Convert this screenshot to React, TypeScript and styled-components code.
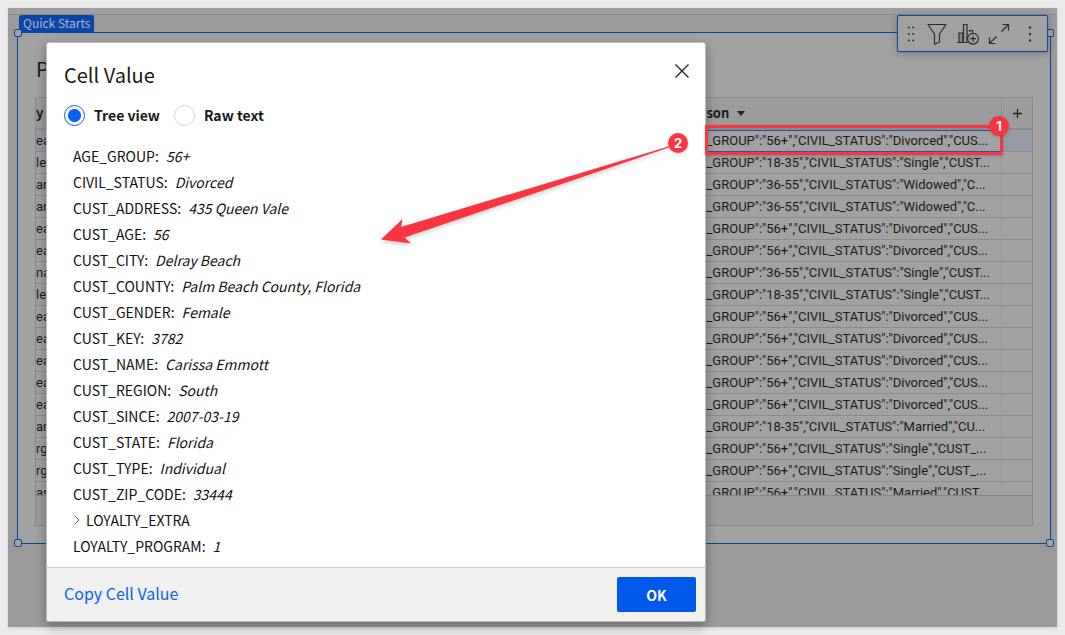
import React from "react";
import styled, { createGlobalStyle } from "styled-components";

const SANS = `"Noto Sans CJK SC", "Noto Sans", sans-serif`;
const BLUE = "#0b45a0";
const RED = "#fb3441";

const GlobalStyle = createGlobalStyle`
  *, *::before, *::after { box-sizing: border-box; }
  body {
    margin: 0;
    background: #ebebeb;
    font-family: ${SANS};
    color: #1a1a1a;
  }
  button, input { font: inherit; }
`;

const Page = styled.div`
  min-height: 100vh;
  padding: 8px;
  display: flex;
`;

const Frame = styled.div`
  position: relative;
  flex: 1;
  min-width: 0;
  padding: 24px 6px 83px 9px;
  background: #9a9a9a;
  box-shadow: 0 1px 4px rgba(0, 0, 0, 0.12);

  &::before {
    content: "";
    position: absolute;
    top: 0;
    left: 0;
    right: 0;
    height: 7px;
    background: #9e9e9e;
    border-bottom: 1px solid #8c8c8c;
  }
`;

const Widget = styled.section`
  position: relative;
  border: 1px solid ${BLUE};
  background: #a1a1a1;
  padding: 23px 17px 17px 17px;
`;

const WidgetTag = styled.span`
  position: absolute;
  left: 1px;
  bottom: 100%;
  height: 18px;
  padding: 0 4px;
  border-radius: 2px 2px 0 0;
  background: #0a46a6;
  color: #a9b6cb;
  font-size: 12px;
  line-height: 16px;
  white-space: nowrap;
`;

const Handle = styled.i<{ $v: "top" | "bottom"; $h: "left" | "right" }>`
  position: absolute;
  ${(p) => p.$v}: -4px;
  ${(p) => p.$h}: -4px;
  width: 8px;
  height: 8px;
  border: 1px solid ${BLUE};
  border-radius: 2px;
  background: #a3a3a3;
`;

const Title = styled.h2`
  margin: 0 0 15px;
  padding-left: 1px;
  font-size: 20px;
  font-weight: 400;
  line-height: 26px;
`;

const Toolbar = styled.div`
  position: absolute;
  top: -18px;
  right: 2px;
  display: flex;
  align-items: center;
  width: 151px;
  height: 37px;
  border: 1px solid #1449a0;
  border-radius: 2px;
  background: #a1a1a1;
  box-shadow: 0 0 1px #1d56ad, 0 2px 8px rgba(0, 0, 0, 0.2);
`;

const ToolButton = styled.button<{ $w: number }>`
  width: ${(p) => p.$w}px;
  height: 35px;
  padding: 0;
  border: 0;
  background: none;
  color: #2b2b2b;
  display: flex;
  align-items: center;
  justify-content: center;
`;

const GridBox = styled.div`
  height: 429px;
  border: 1px solid #8a8a8a;
  display: flex;
  flex-direction: column;
  overflow: hidden;
`;

const GridBody = styled.div`
  height: 397px;
  overflow: hidden;
`;

const GridFoot = styled.div`
  flex: 1;
  border-top: 1px solid #878787;
  background: #9b9b9b;
`;

const Table = styled.table`
  width: 100%;
  border-collapse: separate;
  border-spacing: 0;
  table-layout: fixed;
  font-family: Roboto, sans-serif;
  font-size: 13px;
  line-height: 20px;
  text-align: left;
`;

const Th = styled.th<{ $w?: number; $pad?: number }>`
  width: ${(p) => (p.$w ? `${p.$w}px` : "auto")};
  height: 32px;
  padding: 0 0 0 ${(p) => p.$pad ?? 0}px;
  background: #9c9c9c;
  border-bottom: 2px solid #8b8b8b;
  border-right: 1px solid #919191;
  font-size: 13px;
  font-weight: 700;
  font-family: ${SANS};
  white-space: nowrap;
  &:last-child { border-right: 0; }
`;

const Td = styled.td<{ $on?: boolean }>`
  height: 22px;
  padding: 0;
  border-bottom: 1px solid #8b8b8b;
  border-right: 1px solid #9a9a9a;
  background: ${(p) => (p.$on ? "#9799a3" : "transparent")};
  white-space: nowrap;
  &:last-child { border-right: 0; }
`;

const JsonTd = styled(Td)<{ $selected: boolean }>`
  padding-left: 4px;
  ${(p) =>
    p.$selected &&
    `
    background: #a1a1a1;
    box-shadow: inset 0 1px 0 #1d56ad;
    border-color: #1d56ad;
  `}
`;

const HeadLabel = styled.span`
  display: flex;
  align-items: center;
  gap: 8px;
`;

const AddColumn = styled.button`
  width: 100%;
  padding: 0;
  border: 0;
  background: none;
  color: #222;
  display: flex;
  justify-content: center;
`;

const Dialog = styled.div`
  position: absolute;
  top: 34px;
  left: 38px;
  width: 660px;
  border: 1px solid #b9b9b9;
  border-radius: 3px;
  overflow: hidden;
  background: #fff;
  box-shadow: 0 4px 12px rgba(0, 0, 0, 0.3);
`;

const DialogHead = styled.header`
  display: flex;
  justify-content: space-between;
  align-items: center;
  padding: 16px 15px 0 17px;
  height: 48px;
`;

const DialogTitle = styled.h1`
  margin: 0;
  font-size: 20px;
  font-weight: 400;
  line-height: 28px;
`;

const CloseButton = styled.button`
  width: 16px;
  height: 16px;
  padding: 0;
  border: 0;
  background: none;
  display: flex;
  margin-bottom: 8px;
`;

const Modes = styled.fieldset`
  margin: 0;
  padding: 14px 17px 0;
  border: 0;
  display: flex;
  gap: 14px;
`;

const Mode = styled.label`
  display: flex;
  align-items: center;
  gap: 9px;
  height: 21px;
  font-size: 14px;
  font-weight: 700;
  line-height: 21px;
`;

const Radio = styled.input`
  appearance: none;
  margin: 0;
  width: 21px;
  height: 21px;
  border: 1px solid #d4d4d4;
  border-radius: 50%;
  background: #fff;
  &:checked {
    border-color: #0a5ef0;
    background: radial-gradient(circle, #0a5ef0 6px, #fff 7px);
  }
`;

const Tree = styled.ul`
  list-style: none;
  margin: 0;
  padding: 17px 26px 8px;
`;

const Leaf = styled.li`
  display: flex;
  align-items: center;
  gap: 7px;
  height: 26px;
  font-size: 14px;
  line-height: 26px;
  color: #111;
`;

const Branch = styled(Leaf)`
  gap: 5px;
`;

const Value = styled.em`
  font-style: italic;
`;

const DialogFoot = styled.footer`
  display: flex;
  align-items: center;
  justify-content: space-between;
  height: 54px;
  padding: 0 9px 0 17px;
  border-top: 1px solid #ccc;
  background: #f0f0f0;
`;

const CopyButton = styled.button`
  padding: 0 0 4px;
  border: 0;
  background: none;
  color: #0b62ee;
  font-size: 16px;
  line-height: 24px;
`;

const OkButton = styled.button`
  width: 79px;
  height: 35px;
  padding: 0;
  border: 0;
  border-radius: 2px;
  background: #0059eb;
  color: #fff;
  font-size: 14px;
  font-weight: 700;
`;

const Highlight = styled.div`
  position: absolute;
  top: 117px;
  right: 54px;
  width: 298px;
  height: 30px;
  border: 3px solid ${RED};
  border-radius: 1px;
  box-shadow: 0 1px 3px rgba(0, 0, 0, 0.2);
`;

const Badge = styled.span`
  position: absolute;
  width: 20px;
  height: 20px;
  border-radius: 50%;
  background: ${RED};
  color: #fff;
  font-family: Inter, sans-serif;
  font-size: 13px;
  font-weight: 700;
  line-height: 20px;
  text-align: center;
  box-shadow: 0 1px 3px rgba(0, 0, 0, 0.2);
`;

const CellBadge = styled(Badge)`
  top: -12px;
  right: -9px;
`;

const DialogBadge = styled(Badge)`
  top: 125px;
  left: 660px;
`;

const Arrow = styled.svg`
  position: absolute;
  top: 132px;
  left: 368px;
  filter: drop-shadow(0 2px 2px rgba(0, 0, 0, 0.2));
`;

const fields: [string, string?][] = [
  ["AGE_GROUP", "56+"],
  ["CIVIL_STATUS", "Divorced"],
  ["CUST_ADDRESS", "435 Queen Vale"],
  ["CUST_AGE", "56"],
  ["CUST_CITY", "Delray Beach"],
  ["CUST_COUNTY", "Palm Beach County, Florida"],
  ["CUST_GENDER", "Female"],
  ["CUST_KEY", "3782"],
  ["CUST_NAME", "Carissa Emmott"],
  ["CUST_REGION", "South"],
  ["CUST_SINCE", "2007-03-19"],
  ["CUST_STATE", "Florida"],
  ["CUST_TYPE", "Individual"],
  ["CUST_ZIP_CODE", "33444"],
  ["LOYALTY_EXTRA"],
  ["LOYALTY_PROGRAM", "1"],
];

const rows: [string, string, string, string][] = [
  ["ea", "56+", "Divorced", '"CUS...'],
  ["le", "18-35", "Single", '"CUST...'],
  ["ar", "36-55", "Widowed", '"C...'],
  ["ar", "36-55", "Widowed", '"C...'],
  ["ea", "56+", "Divorced", '"CUS...'],
  ["ea", "56+", "Divorced", '"CUS...'],
  ["na", "36-55", "Single", '"CUST...'],
  ["le", "18-35", "Single", '"CUST...'],
  ["ea", "56+", "Divorced", '"CUS...'],
  ["ea", "56+", "Divorced", '"CUS...'],
  ["ea", "56+", "Divorced", '"CUS...'],
  ["ea", "56+", "Divorced", '"CUS...'],
  ["ea", "56+", "Divorced", '"CUS...'],
  ["ar", "18-35", "Married", '"CU...'],
  ["rg", "56+", "Single", '"CUST_...'],
  ["rg", "56+", "Single", '"CUST_...'],
  ["as", "56+", "Married", '"CUST...'],
];

export default function App() {
  return (
    <Page>
      <GlobalStyle />
      <Frame>
        <Widget>
          <WidgetTag>Quick Starts</WidgetTag>
          <Title>P</Title>
          <GridBox>
            <GridBody>
              <Table>
                <thead>
                  <tr>
                    <Th>y</Th>
                    <Th $w={332} $pad={29}>
                      <HeadLabel>
                        Json
                        <svg width="8" height="5" viewBox="0 0 8 5">
                          <path d="M0 0h8L4 5z" fill="#222" />
                        </svg>
                      </HeadLabel>
                    </Th>
                    <Th $w={30}>
                      <AddColumn aria-label="Add column">
                        <svg width="9" height="9" viewBox="0 0 9 9">
                          <path d="M4.500 0v9M0 4.500h9" stroke="#222" strokeWidth="1.300" />
                        </svg>
                      </AddColumn>
                    </Th>
                  </tr>
                </thead>
                <tbody>
                  {rows.map(([city, age, status, tail], i) => (
                    <tr key={i}>
                      <Td $on={i === 0}>{city}</Td>
                      <JsonTd $selected={i === 0}>
                        {`{"AGE_GROUP":"${age}","CIVIL_STATUS":"${status}",${tail}`}
                      </JsonTd>
                      <Td $on={i === 0} />
                    </tr>
                  ))}
                </tbody>
              </Table>
            </GridBody>
            <GridFoot />
          </GridBox>
          <Handle $v="top" $h="left" />
          <Handle $v="top" $h="right" />
          <Handle $v="bottom" $h="left" />
          <Handle $v="bottom" $h="right" />
          <Toolbar>
            <ToolButton $w={26} aria-label="Move">
              <svg width="8" height="18" viewBox="0 0 8 18" fill="currentColor">
                {[2.5, 9, 15.5].map((y) => (
                  <g key={y}>
                    <circle cx="1.800" cy={y} r="1" />
                    <circle cx="6.200" cy={y} r="1" />
                  </g>
                ))}
              </svg>
            </ToolButton>
            <ToolButton $w={26} aria-label="Filter">
              <svg width="20" height="22" viewBox="0 0 20 22" fill="none" stroke="currentColor" strokeWidth="1.200">
                <path d="M1 1.500h18l-6.500 9.500v8l-5 2.200V11z" strokeLinejoin="round" />
              </svg>
            </ToolButton>
            <ToolButton $w={36} aria-label="Add chart">
              <svg width="24" height="22" viewBox="0 0 24 22" fill="none" stroke="currentColor" strokeWidth="1.200">
                <path d="M1 19.500h10.500M3 19.500V10h4v9.500M7.500 19.500V1.500h3.500v18M13.500 9V7.500h3v2" />
                <path d="M3.500 10h3v9.500h-3z" fill="currentColor" fillOpacity="0.250" stroke="none" />
                <circle cx="17" cy="15.700" r="5.400" />
                <path d="M17 12.700v6M14 15.700h6" />
              </svg>
            </ToolButton>
            <ToolButton $w={26} aria-label="Expand">
              <svg width="22" height="22" viewBox="0 0 22 22" fill="none" stroke="currentColor" strokeWidth="1.200">
                <path d="M14.500 1.500H20.500V7.500M20.500 1.500L13.500 8.500M1.500 14.500V20.500H7.500M1.500 20.500L8.500 13.500" />
              </svg>
            </ToolButton>
            <ToolButton $w={35} aria-label="More">
              <svg width="4" height="18" viewBox="0 0 4 18" fill="currentColor">
                <circle cx="2" cy="2.500" r="1.200" />
                <circle cx="2" cy="9" r="1.200" />
                <circle cx="2" cy="15.500" r="1.200" />
              </svg>
            </ToolButton>
          </Toolbar>
        </Widget>

        <Dialog role="dialog" aria-labelledby="dialog-title">
          <DialogHead>
            <DialogTitle id="dialog-title">Cell Value</DialogTitle>
            <CloseButton aria-label="Close">
              <svg width="16" height="16" viewBox="0 0 16 16">
                <path d="M1.500 1.500l13 13M14.500 1.500l-13 13" stroke="#222" strokeWidth="1.300" />
              </svg>
            </CloseButton>
          </DialogHead>
          <Modes>
            <Mode>
              <Radio type="radio" name="mode" defaultChecked />
              Tree view
            </Mode>
            <Mode>
              <Radio type="radio" name="mode" />
              Raw text
            </Mode>
          </Modes>
          <Tree>
            {fields.map(([name, value]) =>
              value ? (
                <Leaf key={name}>
                  <span>{name}:</span>
                  <Value>{value}</Value>
                </Leaf>
              ) : (
                <Branch key={name}>
                  <svg width="8" height="10" viewBox="0 0 8 10" fill="none">
                    <path d="M2 1l4 4-4 4" stroke="#666" />
                  </svg>
                  <span>{name}</span>
                </Branch>
              )
            )}
          </Tree>
          <DialogFoot>
            <CopyButton>Copy Cell Value</CopyButton>
            <OkButton>OK</OkButton>
          </DialogFoot>
        </Dialog>

        <Highlight>
          <CellBadge>1</CellBadge>
        </Highlight>
        <Arrow width="300" height="110" viewBox="376 140 300 110">
          <path d="M668.500 146.500L401 227L402.500 219L381 239.500L411 243.500L404.500 237.500L669 147.500z" fill={RED} />
        </Arrow>
        <DialogBadge>2</DialogBadge>
      </Frame>
    </Page>
  );
}
